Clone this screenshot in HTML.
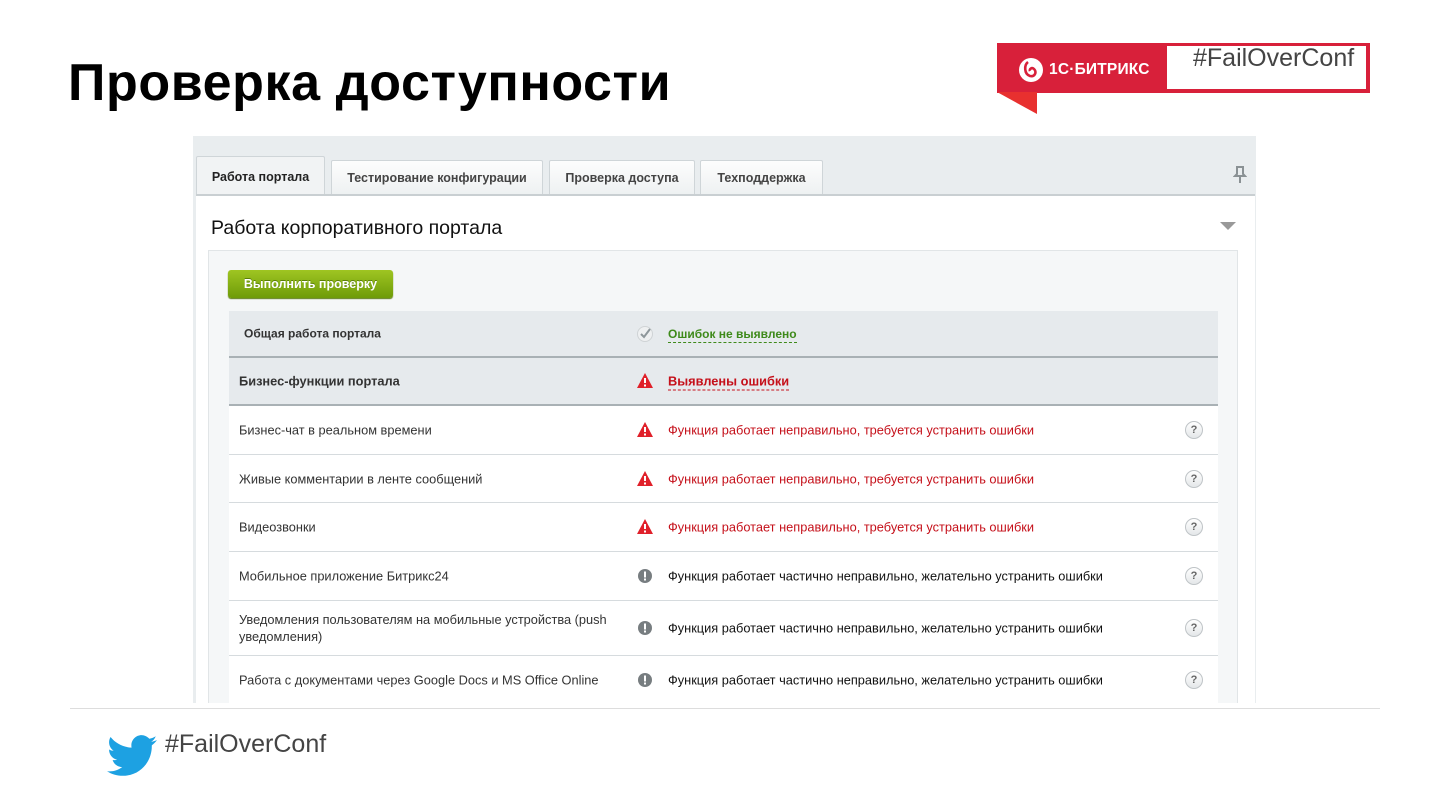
<!DOCTYPE html>
<html><head><meta charset="utf-8"><style>
*{margin:0;padding:0;box-sizing:border-box}
body{width:1440px;height:810px;background:#fff;position:relative;overflow:hidden;font-family:"Liberation Sans",Arial,sans-serif}
.abs{position:absolute}
h1{position:absolute;left:68px;top:53px;font-size:52px;font-weight:bold;letter-spacing:0.6px;color:#000;line-height:60px;white-space:nowrap}
.panel{position:absolute;left:193px;top:136px;width:1063px;height:567px;background:#e9edef;overflow:hidden}
.tab{position:absolute;top:24px;height:34px;border:1px solid #cfd5d8;border-bottom:none;background:linear-gradient(#fdfdfd,#eef1f2);font-size:12.5px;font-weight:bold;color:#444;text-align:center;line-height:34px;border-radius:2px 2px 0 0}
.tab.act{top:20px;height:38px;background:#f1f3f4;color:#222;line-height:40px}
.content{position:absolute;left:3px;top:58px;width:1059px;height:520px;background:#fff;border-top:2px solid #c9cfd2}
.inner{position:absolute;left:12px;top:54px;width:1030px;height:470px;background:#f5f7f8;border:1px solid #e1e5e7}
.btn{position:absolute;left:19px;top:19px;width:165px;height:28px;background:linear-gradient(#9fc522,#6e9b08);border-radius:3px;color:#fff;font-size:12.5px;font-weight:bold;line-height:28px;text-align:center;box-shadow:0 1px 1px #5a7a10;text-shadow:0 -1px 0 #5a7f07}
.tbl{position:absolute;left:20px;top:60px;width:989px}
.row{position:relative;border-bottom:1px solid #d6dbde;background:#fff;font-size:12.8px;color:#333}
.row.h{background:#e6eaed;border-bottom:2px solid #a9b1b5;font-weight:bold}
.row .n{position:absolute;left:10px;top:50%;transform:translateY(-50%);width:380px;line-height:17px}
.row .ic{position:absolute;left:408px;top:50%;transform:translateY(-50%);width:16px;height:16px}
.row .t{position:absolute;left:439px;top:50%;transform:translateY(-50%);white-space:nowrap}
.red{color:#c5101a}
.q{position:absolute;left:956px;top:50%;transform:translateY(-50%);width:18px;height:18px;border-radius:50%;border:1px solid #bfc4c7;background:linear-gradient(#fff,#e4e7e9);font-size:11px;font-weight:bold;color:#666;text-align:center;line-height:16px}
.dash{border-bottom:1px dashed currentColor;padding-bottom:1px}
</style></head><body>
<h1>Проверка доступности</h1>

<div class="abs" style="left:997px;top:43px;width:373px;height:50px;background:#d8203a"></div>
<div class="abs" style="left:1167px;top:46px;width:199px;height:43px;background:#fff"></div>
<svg class="abs" style="left:997px;top:92px" width="40" height="23"><polygon points="0,0 40,0 40,22" fill="#e8302f"/></svg>
<svg class="abs" style="left:1018px;top:57px" width="26" height="26" viewBox="0 0 26 26"><circle cx="13" cy="13" r="12" fill="#fff"/><path d="M10 5 C6 8 6 17 12 19 C17 20 19 15 16 12 C14 10 11 12 12 14" stroke="#d8203a" stroke-width="2.6" fill="none"/></svg>
<div class="abs" style="left:1049px;top:61px;color:#fff;font-weight:bold;font-size:15.5px;letter-spacing:0.2px">1С·БИТРИКС</div>
<div class="abs" style="left:1193px;top:44px;color:#444;font-size:25px">#FailOverConf</div>

<div class="panel">
  <div class="tab act" style="left:3px;width:129px">Работа портала</div>
  <div class="tab" style="left:138px;width:212px">Тестирование конфигурации</div>
  <div class="tab" style="left:356px;width:146px">Проверка доступа</div>
  <div class="tab" style="left:507px;width:123px">Техподдержка</div>
  <svg class="abs" style="left:1040px;top:30px" width="14" height="18"><path d="M3 1h8M4 1v7l-2 2h10l-2-2V1M7 10v7" stroke="#8a9194" stroke-width="2" fill="none"/></svg>
  <div class="content">
    <div class="abs" style="left:15px;top:21px;font-size:19.5px;color:#111">Работа корпоративного портала</div>
    <svg class="abs" style="left:1024px;top:26px" width="16" height="10"><polygon points="0,0 16,0 8,8" fill="#999"/></svg>
    <div class="inner">
      <div class="btn">Выполнить проверку</div>
      <div class="tbl">
        <div class="row h" style="height:47px"><div class="n" style="left:15px;font-size:12px">Общая работа портала</div>
          <svg class="ic" viewBox="0 0 16 16"><circle cx="8" cy="8" r="7.5" fill="#eef0f1" stroke="#cfd3d5"/><path d="M4 8l3 3 6-8" stroke="#8e979b" stroke-width="2" fill="none"/></svg>
          <div class="t" style="color:#3e8a1a;font-size:12px"><span class="dash">Ошибок не выявлено</span></div></div>
        <div class="row h" style="height:48px"><div class="n">Бизнес-функции портала</div>
          <svg class="ic" viewBox="0 0 16 16"><polygon points="8,0 16,15 0,15" fill="#e0202a"/><rect x="7" y="5" width="2" height="5" fill="#fff"/><rect x="7" y="11.5" width="2" height="2" fill="#fff"/></svg>
          <div class="t red"><span class="dash">Выявлены ошибки</span></div></div>
        <div class="row" style="height:49px"><div class="n">Бизнес-чат в реальном времени</div><svg class="ic" viewBox="0 0 16 16"><polygon points="8,0 16,15 0,15" fill="#e0202a"/><rect x="7" y="5" width="2" height="5" fill="#fff"/><rect x="7" y="11.5" width="2" height="2" fill="#fff"/></svg><div class="t red">Функция работает неправильно, требуется устранить ошибки</div><div class="q">?</div></div>
        <div class="row" style="height:48px"><div class="n">Живые комментарии в ленте сообщений</div><svg class="ic" viewBox="0 0 16 16"><polygon points="8,0 16,15 0,15" fill="#e0202a"/><rect x="7" y="5" width="2" height="5" fill="#fff"/><rect x="7" y="11.5" width="2" height="2" fill="#fff"/></svg><div class="t red">Функция работает неправильно, требуется устранить ошибки</div><div class="q">?</div></div>
        <div class="row" style="height:49px"><div class="n">Видеозвонки</div><svg class="ic" viewBox="0 0 16 16"><polygon points="8,0 16,15 0,15" fill="#e0202a"/><rect x="7" y="5" width="2" height="5" fill="#fff"/><rect x="7" y="11.5" width="2" height="2" fill="#fff"/></svg><div class="t red">Функция работает неправильно, требуется устранить ошибки</div><div class="q">?</div></div>
        <div class="row" style="height:49px"><div class="n">Мобильное приложение Битрикс24</div><svg class="ic" viewBox="0 0 16 16"><circle cx="8" cy="8" r="7" fill="#777d80"/><rect x="7" y="3.5" width="2" height="6" fill="#fff"/><rect x="7" y="10.5" width="2" height="2" fill="#fff"/></svg><div class="t" style="color:#111">Функция работает частично неправильно, желательно устранить ошибки</div><div class="q">?</div></div>
        <div class="row" style="height:55px"><div class="n">Уведомления пользователям на мобильные устройства (push уведомления)</div><svg class="ic" viewBox="0 0 16 16"><circle cx="8" cy="8" r="7" fill="#777d80"/><rect x="7" y="3.5" width="2" height="6" fill="#fff"/><rect x="7" y="10.5" width="2" height="2" fill="#fff"/></svg><div class="t" style="color:#111">Функция работает частично неправильно, желательно устранить ошибки</div><div class="q">?</div></div>
        <div class="row" style="height:48px"><div class="n">Работа с документами через Google Docs и MS Office Online</div><svg class="ic" viewBox="0 0 16 16"><circle cx="8" cy="8" r="7" fill="#777d80"/><rect x="7" y="3.5" width="2" height="6" fill="#fff"/><rect x="7" y="10.5" width="2" height="2" fill="#fff"/></svg><div class="t" style="color:#111">Функция работает частично неправильно, желательно устранить ошибки</div><div class="q">?</div></div>
      </div>
    </div>
  </div>
</div>

<div class="abs" style="left:70px;top:708px;width:1310px;height:1px;background:#ddd"></div>
<svg class="abs" style="left:107px;top:735px" width="50" height="42" viewBox="0 0 24 20"><path d="M24 2.4c-.9.4-1.8.6-2.8.8 1-.6 1.8-1.6 2.2-2.7-1 .6-2 1-3.1 1.2C19.3.7 18 0 16.6 0c-2.7 0-4.9 2.2-4.9 4.9 0 .4 0 .8.1 1.1C7.7 5.8 4.1 3.900 1.7.9c-.4.7-.7 1.6-.7 2.5 0 1.7.9 3.2 2.2 4.1-.8 0-1.6-.2-2.2-.6v.1c0 2.4 1.7 4.4 3.9 4.8-.4.1-.8.2-1.3.2-.3 0-.6 0-.9-.1.6 2 2.4 3.4 4.6 3.4-1.7 1.3-3.8 2.1-6.1 2.1-.4 0-.8 0-1.2-.1 2.2 1.4 4.8 2.2 7.5 2.2 9.1 0 14-7.5 14-14v-.6c1-.7 1.8-1.6 2.5-2.5z" fill="#1da1e2"/></svg>
<div class="abs" style="left:165px;top:730px;font-size:25px;color:#444">#FailOverConf</div>
</body></html>
